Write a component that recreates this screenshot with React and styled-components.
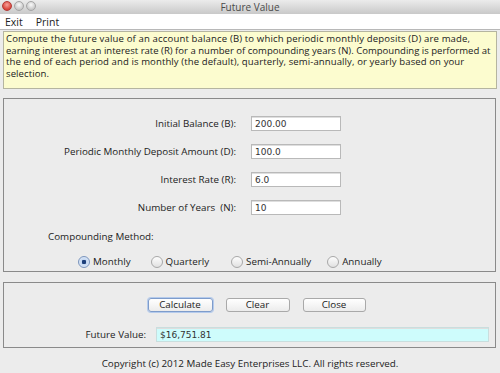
import React from 'react';
import styled, { createGlobalStyle } from 'styled-components';

const Global = createGlobalStyle`
  html, body { margin: 0; padding: 0; }
  body {
    background: #ececec;
    font-family: "Open Sans", "DejaVu Sans", sans-serif;
    font-size: 9.8px;
    color: #1c1c1c;
  }
`;

const Window = styled.div`
  width: 500px;
  height: 373px;
  background: #ececec;
  display: flex;
  flex-direction: column;
  overflow: hidden;
`;

const TitleBar = styled.div`
  height: 14px;
  position: relative;
  display: flex;
  align-items: center;
  justify-content: center;
  background: linear-gradient(#ececec, #c9c9c9);
  color: #4a4a4a;
  font-size: 10px;
`;

const Lights = styled.div`
  position: absolute;
  left: 2px;
  top: 1px;
  display: flex;
  gap: 2px;
`;

const Light = styled.span`
  width: 10px;
  height: 10px;
  border-radius: 50%;
  box-sizing: border-box;
  border: 1px solid ${(p) => (p.red ? '#b33a36' : '#a5a5a5')};
  background: ${(p) =>
    p.red
      ? 'radial-gradient(circle at 50% 35%, #f7a29a, #d9443a 70%)'
      : 'radial-gradient(circle at 50% 35%, #fafafa, #c8c8c8 70%)'};
`;

const MenuBar = styled.div`
  height: 15px;
  background: #fff;
  border-bottom: 1px solid #b8b8b8;
  display: flex;
  align-items: center;
  gap: 13px;
  padding-left: 5px;
  font-size: 10.5px;
  color: #222;
`;

const Description = styled.div`
  margin: 1px 3px 0;
  height: 58px;
  box-sizing: border-box;
  background: #fcfccf;
  border: 1px solid #b5b5a0;
  padding: 1px 2px;
  line-height: 11.6px;
  font-size: 9.55px;
  color: #222;
  overflow: hidden;
`;

const Line = styled.span`
  display: block;
  white-space: nowrap;
  letter-spacing: ${(p) => p.ls || 0}px;
`;

const Panel = styled.div`
  margin: ${(p) => p.top}px 4px 0 3px;
  height: ${(p) => p.h}px;
  box-sizing: border-box;
  border: 1px solid #8a8a8a;
  padding-top: ${(p) => p.pad}px;
  display: flex;
  flex-direction: column;
`;

const Form = styled.div`
  display: grid;
  grid-template-columns: 232px 90px;
  column-gap: 15px;
  row-gap: 13px;
  align-items: center;
`;

const Label = styled.label`
  text-align: right;
  color: #222;
`;

const Field = styled.div`
  height: 15px;
  box-sizing: border-box;
  background: ${(p) => (p.cyan ? '#cefcfc' : '#fff')};
  border: 1px solid ${(p) => (p.cyan ? '#c9dede' : '#b9b9b9')};
  box-shadow: inset 0 1px 0 #dedede;
  padding-left: 3px;
  display: flex;
  align-items: center;
  font-family: "DejaVu Sans", sans-serif;
  font-size: 9px;
  color: #333;
`;

const Section = styled.div`
  margin: 15px 0 0 44px;
  color: #222;
`;

const Radios = styled.div`
  display: flex;
  align-items: center;
  margin: 12px 0 0 74px;
`;

const Radio = styled.div`
  display: flex;
  align-items: center;
  gap: 3px;
  margin-right: ${(p) => p.gap}px;
`;

const Dot = styled.span`
  width: 12px;
  height: 12px;
  box-sizing: border-box;
  border-radius: 50%;
  border: 1px solid ${(p) => (p.on ? '#7b95bd' : '#a8a8a8')};
  background: ${(p) =>
    p.on
      ? 'radial-gradient(circle, #1c3f7a 0 2px, #c5d8f2 2.5px, #e8f0fb 100%)'
      : 'linear-gradient(#fdfdfd, #e1e1e1)'};
`;

const Buttons = styled.div`
  display: flex;
  justify-content: center;
  gap: 13px;
  margin-left: 14px;
`;

const Button = styled.button`
  width: ${(p) => p.w}px;
  height: 14px;
  padding: 0;
  border-radius: 3px;
  border: 1px solid ${(p) => (p.focus ? '#7e9ccb' : '#a9a9a9')};
  box-shadow: ${(p) => (p.focus ? '0 0 0 1px #b5cbec' : 'none')};
  background: linear-gradient(#ffffff, #ececec);
  font-family: inherit;
  font-size: 9.8px;
  color: #222;
  line-height: 12px;
`;

const ResultRow = styled.div`
  display: grid;
  grid-template-columns: 142px 333px;
  column-gap: 10px;
  align-items: center;
  margin-top: 15px;
`;

const Copyright = styled.div`
  text-align: center;
  margin-top: 9px;
  color: #222;
`;

const fields = [
  ['Initial Balance (B):', '200.00'],
  ['Periodic Monthly Deposit Amount (D):', '100.0'],
  ['Interest Rate (R):', '6.0'],
  ['Number of Years\u00a0\u00a0(N):', '10'],
];

const options = [
  ['Monthly', true, 20],
  ['Quarterly', false, 22],
  ['Semi-Annually', false, 16],
  ['Annually', false, 0],
];

const text = [
  ['Compute the future value of an account balance (B) to which periodic monthly deposits (D) are made,', 0.15],
  ['earning interest at an interest rate (R) for a number of compounding years (N). Compounding is performed at', 0],
  ['the end of each period and is monthly (the default), quarterly, semi-annually, or yearly based on your', 0.1],
  ['selection.', 0.1],
];

export default function App() {
  return (
    <Window>
      <Global />
      <TitleBar>
        <Lights>
          <Light red />
          <Light />
          <Light />
        </Lights>
        Future Value
      </TitleBar>
      <MenuBar>
        <span>Exit</span>
        <span>Print</span>
      </MenuBar>
      <Description>
        {text.map(([line, ls]) => (
          <Line key={line} ls={ls}>{line}</Line>
        ))}
      </Description>
      <Panel top={9} h={174} pad={17}>
        <Form>
          {fields.map(([label, value]) => (
            <React.Fragment key={label}>
              <Label>{label}</Label>
              <Field>{value}</Field>
            </React.Fragment>
          ))}
        </Form>
        <Section>Compounding Method:</Section>
        <Radios>
          {options.map(([name, on, gap]) => (
            <Radio key={name} gap={gap}>
              <Dot on={on} />
              {name}
            </Radio>
          ))}
        </Radios>
      </Panel>
      <Panel top={10} h={66} pad={15}>
        <Buttons>
          <Button w={65} focus>Calculate</Button>
          <Button w={64}>Clear</Button>
          <Button w={63}>Close</Button>
        </Buttons>
        <ResultRow>
          <Label>Future Value:</Label>
          <Field cyan>$16,751.81</Field>
        </ResultRow>
      </Panel>
      <Copyright>Copyright (c) 2012 Made Easy Enterprises LLC. All rights reserved.</Copyright>
    </Window>
  );
}
